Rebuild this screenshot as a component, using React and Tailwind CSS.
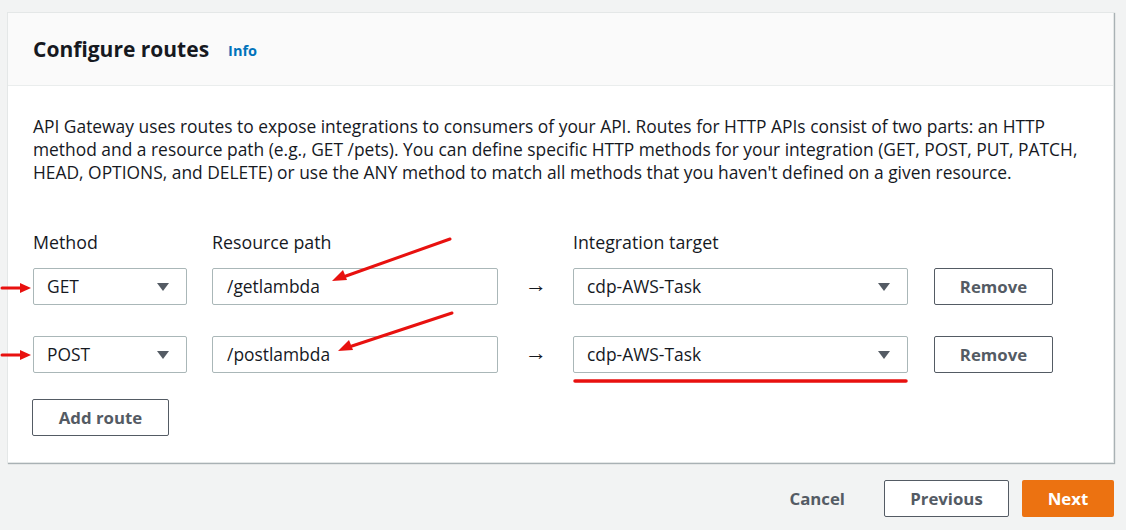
const font = { fontFamily: '"Open Sans", "Noto Sans", Arial, sans-serif' }

function Caret() {
  return (
    <svg width="14" height="10" viewBox="0 0 14 10" className="shrink-0">
      <path d="M1 1 L13 1 L7 9 Z" fill="#545b64" />
    </svg>
  )
}

function Select({ value, width }) {
  return (
    <div
      className={`${width} h-[37px] border border-[#aab7b8] rounded-[2px] bg-white flex items-center justify-between pl-[13px] pr-[16px] text-[17.4px] text-[#16191f]`}
    >
      <span>{value}</span>
      <Caret />
    </div>
  )
}

function Input({ value }) {
  return (
    <div className="w-[286px] h-[37px] border border-[#aab7b8] rounded-[2px] bg-white flex items-center px-[14px] text-[17.4px] text-[#16191f]">
      {value}
    </div>
  )
}

function OutlineButton({ children, className = '' }) {
  return (
    <button
      className={`h-[37px] border border-[#545b64] rounded-[2px] bg-white text-[#545b64] font-bold text-[16.8px] flex items-center justify-center ${className}`}
    >
      {children}
    </button>
  )
}

const routes = [
  { method: 'GET', path: '/getlambda', target: 'cdp-AWS-Task' },
  { method: 'POST', path: '/postlambda', target: 'cdp-AWS-Task' },
]

export default function App() {
  return (
    <div className="relative w-[1126px] h-[530px] bg-[#f2f3f3] overflow-hidden" style={font}>
      <div className="pt-[12px] pl-[7px] pr-[12px]">
        {/* card */}
        <div className="bg-white border border-[#e4e7e7] shadow-[1px_1px_1px_rgba(0,28,36,0.3)]">
          <div className="h-[73px] bg-[#fafafa] border-b border-[#eaeded] flex items-center pl-[25px] gap-[19px]">
            <h2 className="text-[21px] font-bold text-[#16191f] leading-none">Configure routes</h2>
            <span className="text-[14.5px] font-bold text-[#0073bb] mt-[3px]">Info</span>
          </div>
          <div className="pl-[25px] pr-[10px] pt-[29px] pb-[26px]">
            <p className="text-[17.4px] leading-[23px] text-[#16191f] whitespace-nowrap">
              API Gateway uses routes to expose integrations to consumers of your API. Routes for HTTP APIs consist of two parts: an HTTP
              <br />
              method and a resource path (e.g., GET /pets). You can define specific HTTP methods for your integration (GET, POST, PUT, PATCH,
              <br />
              HEAD, OPTIONS, and DELETE) or use the ANY method to match all methods that you haven't defined on a given resource.
            </p>

            <div className="mt-[47px] flex text-[17.8px] text-[#16191f] leading-[23px]">
              <div className="w-[154px]">Method</div>
              <div className="w-[286px] ml-[25px]">Resource path</div>
              <div className="ml-[75px]">Integration target</div>
            </div>

            <div className="mt-[14px] flex flex-col gap-[31px]">
              {routes.map((r) => (
                <div key={r.method} className="flex items-center">
                  <Select value={r.method} width="w-[154px]" />
                  <div className="ml-[25px]">
                    <Input value={r.path} />
                  </div>
                  <div className="w-[75px] text-center text-[22px] leading-none text-[#16191f] pl-[1px] pb-[7px]">→</div>
                  <Select value={r.target} width="w-[335px]" />
                  <OutlineButton className="ml-[26px] w-[119px]">Remove</OutlineButton>
                </div>
              ))}
            </div>

            <OutlineButton className="mt-[26px] w-[137px] -ml-[1px]">Add route</OutlineButton>
          </div>
        </div>

        {/* footer */}
        <div className="mt-[17px] flex items-center justify-end">
          <button className="text-[16.8px] font-bold text-[#545b64] px-[20px] mr-[19px]">Cancel</button>
          <OutlineButton className="w-[125px]">Previous</OutlineButton>
          <button className="ml-[13px] w-[92px] h-[37px] rounded-[2px] bg-[#ec7211] text-white font-bold text-[16.8px]">
            Next
          </button>
        </div>
      </div>

      {/* red annotations */}
      <svg className="absolute inset-0 pointer-events-none" width="1126" height="530">
        <g stroke="#e8110f" strokeWidth="3" strokeLinecap="round" fill="#e8110f">
          <line x1="2" y1="288" x2="22" y2="288" />
          <path d="M31 288 L20 283 L20 293 Z" stroke="none" />
          <line x1="2" y1="355" x2="22" y2="355" />
          <path d="M31 355 L20 350 L20 360 Z" stroke="none" />
          <line x1="450" y1="239" x2="346" y2="276" />
          <path d="M332 281 L343 270 L347 280 Z" stroke="none" />
          <line x1="452" y1="313" x2="352" y2="346" />
          <path d="M338 351 L349 340 L353 350 Z" stroke="none" />
          <line x1="575" y1="381" x2="906" y2="381" strokeWidth="3.5" />
        </g>
      </svg>
    </div>
  )
}
